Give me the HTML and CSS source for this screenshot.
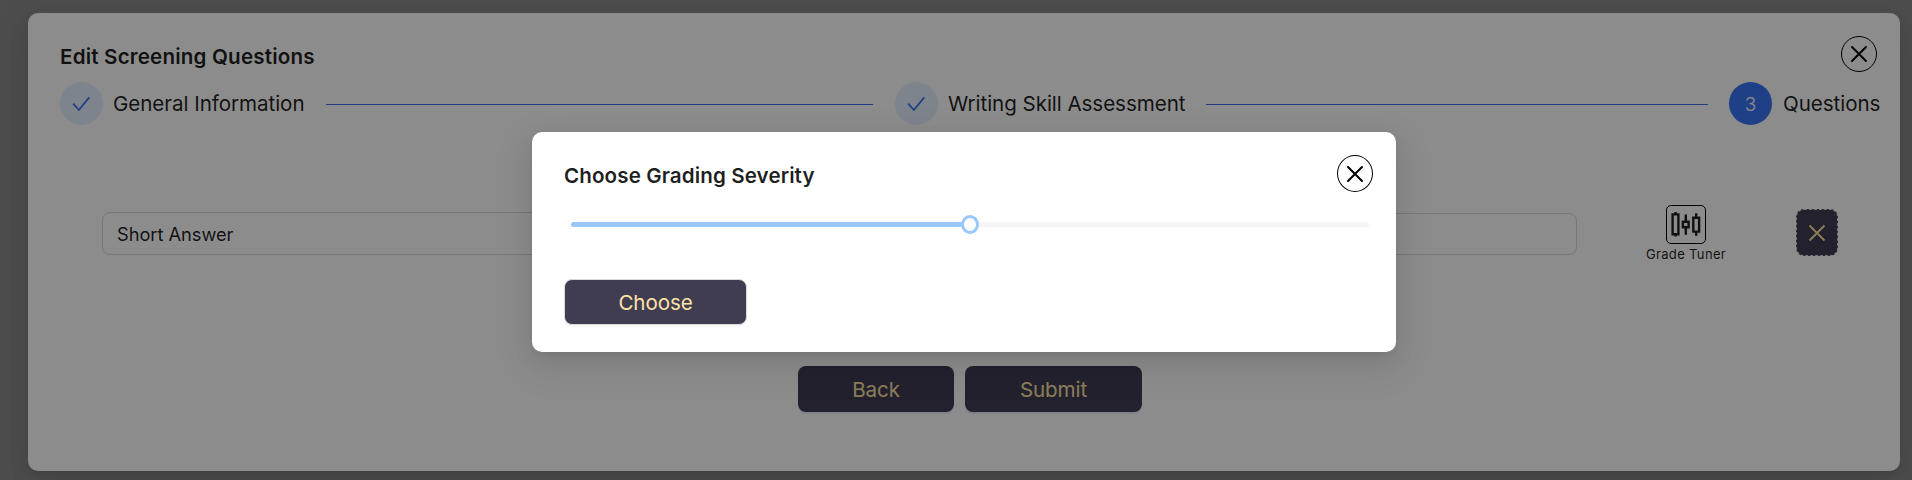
FILE: index.html
```html
<!DOCTYPE html>
<html lang="en">
<head>
<meta charset="utf-8">
<title>Edit Screening Questions</title>
<link rel="stylesheet" href="styles.css">
</head>
<body>
<div class="mask mask-outer">
  <section class="modal editor">
    <header class="editor-head">
      <h1 class="title editor-title">Edit Screening Questions</h1>
      <button class="close" aria-label="Close"><svg width="18" height="18" viewBox="0 0 18 18"><path d="M2 2L16 16M16 2L2 16"/></svg></button>
    </header>
    <div class="steps">
      <span class="dot"><svg width="19" height="16" viewBox="0 0 19 16"><path d="M1.2 7.6L6.9 14L17.2 1.4"/></svg></span>
      <span class="label label-general">General Information</span>
      <i class="line line-first"></i>
      <span class="dot"><svg width="19" height="16" viewBox="0 0 19 16"><path d="M1.2 7.6L6.9 14L17.2 1.4"/></svg></span>
      <span class="label label-writing">Writing Skill Assessment</span>
      <i class="line line-second"></i>
      <span class="dot dot-active">3</span>
      <span class="label label-questions">Questions</span>
    </div>
    <div class="question">
      <div class="field field-type">Short Answer</div>
      <div class="field field-text"></div>
      <div class="tuner">
        <div class="tuner-icon"><svg width="30" height="27" viewBox="0 0 30 27"><path d="M1.6 3.4h5.8v19.8H1.6zM4.5 1v2.4M4.5 23.2v2.4M11.9 10.8h5.7v5.4h-5.7zM14.8 3.4v7.4M14.8 16.2v7.6M22.3 6.8h5.8v13.8h-5.8zM25.2 2.3v4.5M25.2 20.6v4.2"/></svg></div>
        <span class="tuner-label">Grade Tuner</span>
      </div>
      <button class="remove" aria-label="Remove"><svg width="18" height="18" viewBox="0 0 18 18"><path d="M1.5 1.5L16.5 16.5M16.5 1.5L1.5 16.5"/></svg></button>
    </div>
    <footer class="actions">
      <button class="btn btn-back">Back</button>
      <button class="btn btn-submit">Submit</button>
    </footer>
  </section>
</div>
<div class="mask mask-inner">
  <section class="modal dialog">
    <header class="dialog-head">
      <h2 class="title dialog-title">Choose Grading Severity</h2>
      <button class="close close-dialog" aria-label="Close"><svg width="18" height="18" viewBox="0 0 18 18"><path d="M2 2L16 16M16 2L2 16"/></svg></button>
    </header>
    <div class="slider"><div class="track"></div><div class="handle"></div></div>
    <button class="btn btn-choose">Choose</button>
  </section>
</div>
</body>
</html>
```

FILE: styles.css
```css
* { box-sizing: border-box; margin: 0; padding: 0; }
body { width: 1912px; height: 480px; overflow: hidden; background: #fff; font-family: Inter, "Liberation Sans", sans-serif; color: rgba(0,0,0,.88); }
button { font: inherit; border: 0; background: none; }
svg { display: block; fill: none; stroke: currentColor; }
.mask { position: absolute; inset: 0; background: rgba(0,0,0,.45); display: flex; align-items: flex-start; }
.mask-outer { padding: 13px 12px 9px 28px; }
.mask-inner { padding: 132px 0 0 532px; }
.modal { background: #fff; border-radius: 10px; box-shadow: 0 8px 21px rgba(0,0,0,.08), 0 4px 8px -5px rgba(0,0,0,.12), 0 12px 37px 10px rgba(0,0,0,.05); }
.editor { width: 1872px; height: 458px; }
.editor-head { display: flex; justify-content: space-between; align-items: flex-start; padding: 23px 23px 0 32px; height: 69px; }
.title { font-size: 20.6px; font-weight: 600; line-height: 30px; white-space: nowrap; }
.editor-title { margin-top: 6px; letter-spacing: .18px; }
.close { width: 36px; height: 36px; border: 1px solid #000; border-radius: 50%; display: flex; align-items: center; justify-content: center; color: #000; }
.close svg { stroke-width: 2; stroke-linecap: round; }
.close-dialog { height: 37px; }
.steps { display: flex; align-items: center; height: 43px; padding-left: 32px; white-space: nowrap; }
.dot { flex: none; width: 43px; height: 43px; border-radius: 50%; background: #e6f0ff; display: flex; align-items: center; justify-content: center; color: #3770f0; font-size: 19px; }
.dot svg { stroke-width: 1.7; margin-top: 1px; }
.dot-active { background: #3a75f5; color: #fff; font-weight: 300; padding-top: 1px; }
.label { flex: none; margin-left: 10px; font-size: 20.6px; line-height: 30px; letter-spacing: -0.06px; }
.label-general { width: 213px; }
.label-writing { width: 258px; }
.label-questions { padding-left: 1px; }
.line { flex: none; height: 1px; background: #3770f0; margin-right: 21px; margin-top: 2px; }
.line-first { width: 547px; margin-right: 22px; }
.line-second { width: 502px; }
.question { display: flex; align-items: flex-start; margin-top: 79px; height: 72px; padding: 1px 0 0 74px; }
.field { border: 1px solid #d9d9d9; border-radius: 8px; height: 43px; margin-top: 7px; }
.field-type { width: 690px; padding: 0 14px; font-size: 18.3px; line-height: 42px; letter-spacing: -0.05px; }
.field-text { width: 770px; height: 42px; margin: 8px 0 0 15px; }
.tuner { width: 80px; margin-left: 69px; display: flex; flex-direction: column; align-items: center; }
.tuner-icon { width: 40px; height: 39px; border: 1px solid #000; border-radius: 5px; display: flex; align-items: center; justify-content: center; }
.tuner-icon svg { stroke-width: 2.4; }
.tuner-label { font-size: 13px; line-height: 21px; letter-spacing: .35px; white-space: nowrap; }
.remove { width: 42px; height: 47px; margin: 4px 0 0 70px; border: 1px dashed #d9d9d9; border-radius: 8px; background: #403c52; color: #fde3a7; display: flex; align-items: center; justify-content: center; }
.remove svg { stroke-width: 1.8; }
.actions { display: flex; gap: 11px; margin-top: 90px; padding-left: 770px; }
.btn { height: 46px; border-radius: 8px; background: #403c52; color: #fde3a7; font-size: 20.6px; line-height: 45px; padding-top: 1px; letter-spacing: -0.1px; box-shadow: 0 2px 1px rgba(5,80,255,.12); }
.btn-back { width: 156px; }
.btn-submit { width: 177px; }
.dialog { width: 864px; height: 220px; padding: 0 0 0 32px; }
.dialog-head { display: flex; justify-content: space-between; align-items: flex-start; padding: 23px 23px 0 0; height: 90px; }
.dialog-title { margin-top: 6px; letter-spacing: .1px; }
.slider { position: relative; width: 798px; height: 5px; margin-left: 7px; background: #f5f5f5; border-radius: 3px; }
.track { width: 399px; height: 5px; border-radius: 3px; background: #9bc8fb; }
.handle { position: absolute; left: 390px; top: -7px; width: 18px; height: 19px; border: 3px solid #9bc8fb; border-radius: 50%; background: #fff; }
.btn-choose { display: block; width: 183px; height: 46px; margin-top: 52px; border: 1px solid #d9d9d9; line-height: 43px; padding-top: 1px; box-shadow: 0 2px 1px rgba(0,0,0,.03); }
```
